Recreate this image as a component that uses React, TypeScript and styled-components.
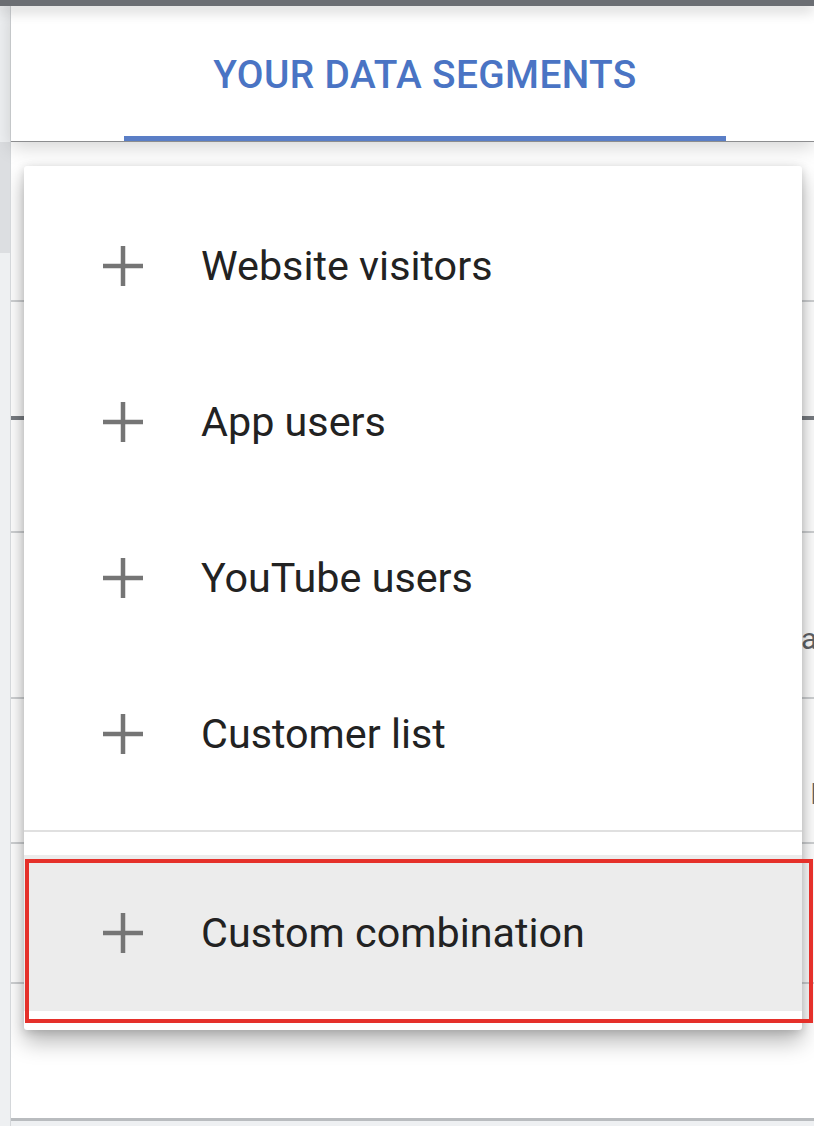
import styled, { createGlobalStyle } from 'styled-components'

const GlobalStyle = createGlobalStyle`
	html, body {
		margin: 0;
		padding: 0;
		background: #ffffff;
	}
	body {
		font-family: Roboto, 'Noto Sans', Arial, sans-serif;
	}
`

const Page = styled.div`
	width: 814px;
	height: 1126px;
	overflow: hidden;
	display: flex;
	flex-direction: column;
	background: #ffffff;
`

const TopBar = styled.div`
	height: 6px;
	flex: none;
	background: #6b6e73;
	box-shadow: 0 4px 14px rgba(0, 0, 0, 0.28);
	position: relative;
	z-index: 3;
`

const Body = styled.div`
	flex: 1;
	display: flex;
	min-height: 0;
`

const Rail = styled.div`
	width: 10px;
	flex: none;
	background: #eef0f2;
	border-right: 1px solid #d4d7da;
	padding-top: 136px;
`

const Thumb = styled.div`
	height: 111px;
	background: #dcdee1;
`

const Main = styled.div`
	flex: 1;
	display: flex;
	flex-direction: column;
	min-width: 0;
`

const Header = styled.header`
	height: 135px;
	flex: none;
	display: flex;
	background: #ffffff;
	border-bottom: 1px solid #8c8d8f;
	box-shadow: 0 6px 18px rgba(0, 0, 0, 0.16);
	position: relative;
	z-index: 2;
`

const Tab = styled.div<{ active?: boolean }>`
	margin-left: 113px;
	width: 602px;
	box-sizing: border-box;
	display: flex;
	align-items: center;
	justify-content: center;
	padding-top: 7px;
	font-size: 38.8px;
	font-weight: 500;
	letter-spacing: 0.4px;
	color: ${(props) => (props.active ? '#4a74c4' : '#5f6368')};
	border-bottom: 5px solid ${(props) => (props.active ? '#5a7ec6' : 'transparent')};
`

const Content = styled.div`
	flex: 1;
	position: relative;
	overflow: hidden;
	display: flex;
	flex-direction: column;
`

const Row = styled.div<{ h: number; line: 'light' | 'dark' | 'end' }>`
	height: ${(props) => props.h}px;
	flex: none;
	box-sizing: border-box;
	display: flex;
	align-items: center;
	border-bottom: ${(props) =>
		props.line === 'dark'
			? '4px solid #777b80'
			: props.line === 'end'
			? '3px solid #b9bcbf'
			: '2px solid #cfd1d3'};
`

// table text that sits mostly under the open menu
const CellText = styled.span<{ offset: number }>`
	margin-left: ${(props) => props.offset}px;
	margin-top: 46px;
	white-space: nowrap;
	font-size: 30px;
	color: #5f6368;
`

const Footer = styled.div`
	flex: 1;
	background: #eef0f2;
`

const Menu = styled.div`
	position: absolute;
	left: 13px;
	top: 24px;
	width: 778px;
	box-sizing: border-box;
	padding: 22px 0 19px;
	background: #ffffff;
	border-radius: 3px;
	box-shadow: 0 12px 22px rgba(0, 0, 0, 0.28), 0 2px 10px rgba(0, 0, 0, 0.16);
	z-index: 1;
`

const Item = styled.div<{ highlighted?: boolean }>`
	height: 156px;
	display: flex;
	align-items: center;
	padding-left: 79px;
	background: ${(props) => (props.highlighted ? '#ececec' : 'transparent')};
`

const Icon = styled.svg`
	width: 40px;
	height: 40px;
	flex: none;
`

const Label = styled.span`
	margin-left: 58px;
	font-size: 41.3px;
	font-weight: 400;
	color: #222222;
`

const Divider = styled.div`
	height: 2px;
	margin: 18px 0 23px;
	background: #e0e0e0;
`

const Annotation = styled.div`
	position: absolute;
	left: 14px;
	top: 717px;
	width: 788px;
	height: 164px;
	box-sizing: border-box;
	border: 4px solid #e5302a;
	z-index: 2;
	pointer-events: none;
`

function PlusIcon() {
	return (
		<Icon viewBox="0 0 40 40">
			<rect x="17.75" y="0" width="4.5" height="40" fill="#757575" />
			<rect x="0" y="17.75" width="40" height="4.5" fill="#757575" />
		</Icon>
	)
}

const segments = ['Website visitors', 'App users', 'YouTube users', 'Customer list']

export default function App() {
	return (
		<>
			<GlobalStyle />
			<Page>
				<TopBar />
				<Body>
					<Rail>
						<Thumb />
					</Rail>
					<Main>
						<Header>
							<Tab active>YOUR DATA SEGMENTS</Tab>
						</Header>
						<Content>
							<Row h={160} line="light" />
							<Row h={118} line="dark" />
							<Row h={113} line="light" />
							<Row h={166} line="light">
								<CellText offset={790}>ac</CellText>
							</Row>
							<Row h={145} line="light">
								<CellText offset={799}>In</CellText>
							</Row>
							<Row h={140} line="light" />
							<Row h={137} line="end" />
							<Footer />

							<Menu>
								{segments.map((el, index) => (
									<Item key={`segment-${index}`}>
										<PlusIcon />
										<Label>{el}</Label>
									</Item>
								))}
								<Divider />
								<Item highlighted>
									<PlusIcon />
									<Label>Custom combination</Label>
								</Item>
							</Menu>
							<Annotation />
						</Content>
					</Main>
				</Body>
			</Page>
		</>
	)
}
